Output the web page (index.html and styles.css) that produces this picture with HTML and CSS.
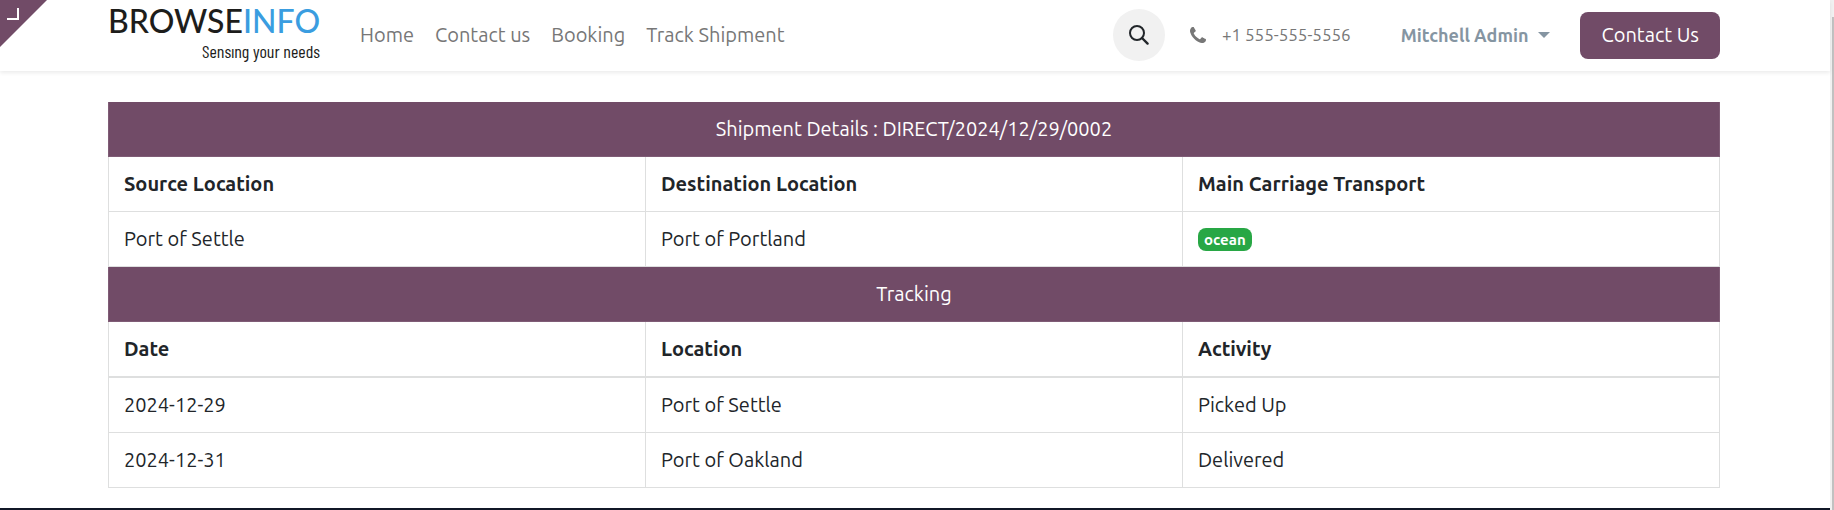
FILE: index.html
```
<!DOCTYPE html>
<html lang="en">
<head>
    <meta charset="UTF-8" />
    <meta name="viewport" content="width=device-width, initial-scale=1.0" />
    <title>Track Shipment | BrowseInfo</title>
    <link rel="stylesheet" href="styles.css">
</head>
<body>
    <div class="page">
        <header class="header">
            <a class="logo" href="#">
                <span class="logo-name">BROWSE<span class="logo-info">INFO</span></span>
                <span class="logo-tagline">Sensıng your needs</span>
            </a>
            <nav class="menu">
                <a href="#">Home</a>
                <a href="#">Contact us</a>
                <a href="#">Booking</a>
                <a href="#">Track Shipment</a>
            </nav>
            <div class="actions">
                <button class="search-button" type="button" aria-label="Search">
                    <svg width="22" height="22" viewBox="0 0 22 22" fill="none" stroke="#212529">
                        <circle cx="9" cy="9" r="7" stroke-width="2" />
                        <path d="M14 14l5.600 5.600" stroke-width="2.400" stroke-linecap="round" />
                    </svg>
                </button>
                <a class="phone" href="tel:+15555555556">
                    <svg width="16" height="16" viewBox="0 0 1408 1408" fill="currentColor">
                        <path d="M1408 1112q0 27-10 70.500t-21 68.500q-21 50-122 106-94 51-186 51-27 0-53-3.500t-57.500-12.500-47-14.500-55.500-20.500-49-18q-98-35-175-83-127-79-264-216t-216-264q-48-77-83-175-3-9-18-49t-20.500-55.500-14.500-47-12.500-57.500-3.500-53q0-92 51-186 56-101 106-122 25-11 68.500-21t70.500-10q14 0 21 3 18 6 53 76 11 19 30 54t35 63.500 31 53.500q3 4 17.500 25t21.500 35.500 7 28.500q0 20-28.500 50t-62 55-62 53-28.500 46q0 9 5 22.500t8.500 20.500 14 24 11.500 19q76 137 174 235t235 174q2 1 19 11.500t24 14 20.500 8.500 22.500 5q18 0 46-28.500t53-62 55-62 50-28.500q14 0 28.500 7t35.500 21.500 25 17.500q25 15 53.500 31t63.500 35 54 30q70 35 76 53 3 7 3 21z" />
                    </svg>
                    <span>+1 555-555-5556</span>
                </a>
                <button class="user-button" type="button" aria-haspopup="true">Mitchell Admin</button>
                <a class="contact-button" href="#">Contact Us</a>
            </div>
            <a class="corner" href="#" aria-label="Edit in backend">
                <svg width="47" height="47" viewBox="0 0 47 47">
                    <path d="M0 0H47L0 47z" fill="#714b67" />
                    <path d="M7 19H18V8" fill="none" stroke="#fff" stroke-width="2" />
                </svg>
            </a>
        </header>
        <main class="content">
            <table class="shipment">
                <thead>
                    <tr class="title">
                        <td colspan="3">Shipment Details : DIRECT/2024/12/29/0002</td>
                    </tr>
                    <tr>
                        <th scope="col">Source Location</th>
                        <th scope="col">Destination Location</th>
                        <th scope="col">Main Carriage Transport</th>
                    </tr>
                </thead>
                <tbody>
                    <tr>
                        <td>Port of Settle</td>
                        <td>Port of Portland</td>
                        <td><span class="badge">ocean</span></td>
                    </tr>
                </tbody>
                <tbody>
                    <tr class="title">
                        <td colspan="3">Tracking</td>
                    </tr>
                    <tr class="tracking-head">
                        <th scope="col">Date</th>
                        <th scope="col">Location</th>
                        <th scope="col">Activity</th>
                    </tr>
                    <tr>
                        <td>2024-12-29</td>
                        <td>Port of Settle</td>
                        <td>Picked Up</td>
                    </tr>
                    <tr>
                        <td>2024-12-31</td>
                        <td>Port of Oakland</td>
                        <td>Delivered</td>
                    </tr>
                </tbody>
            </table>
        </main>
        <footer class="footer"></footer>
    </div>
    <div class="scrollbar"><div class="scrollbar-thumb"></div></div>
</body>
</html>
```

FILE: styles.css
```
* {
    box-sizing: border-box;
}
body {
    margin: 0;
    display: flex;
    height: 100vh;
    overflow: hidden;
    font-family: Ubuntu, "Noto Sans", sans-serif;
    font-size: 20px;
    line-height: 30px;
    color: #212529;
    background: #fff;
}
a {
    color: inherit;
    text-decoration: none;
}
button {
    font-family: inherit;
    border: 0;
    cursor: pointer;
}
.page {
    flex: 1;
    display: flex;
    flex-direction: column;
}

/* Header */
.header {
    position: relative;
    display: flex;
    align-items: center;
    height: 71px;
    padding: 0 110px 1px 108px;
    box-shadow: 0 2px 4px rgba(0, 0, 0, 0.08);
}
.corner {
    position: absolute;
    top: 0;
    left: 0;
}
.corner svg {
    display: block;
}
.logo {
    display: flex;
    flex-direction: column;
    width: 212px;
    color: #1d1d1b;
}
.logo-name {
    font-family: Lato, sans-serif;
    font-size: 32px;
    font-weight: 500;
    line-height: 32px;
}
.logo-info {
    color: #3a9de0;
}
.logo-tagline {
    align-self: flex-end;
    font-family: "Barlow Condensed", "Roboto Condensed", "Liberation Sans Narrow", Roboto, sans-serif;
    font-size: 18px;
    line-height: 28px;
}
.menu {
    display: flex;
    gap: 21px;
    margin-left: 40px;
    color: #777;
}
.actions {
    display: flex;
    align-items: center;
    margin-left: auto;
}
.search-button {
    display: flex;
    align-items: center;
    justify-content: center;
    width: 52px;
    height: 52px;
    padding: 0;
    border-radius: 50%;
    background: #f1f1f1;
}
.phone {
    display: flex;
    align-items: center;
    gap: 16px;
    margin-left: 25px;
    font-size: 17px;
    color: #777;
}
.user-button {
    display: flex;
    align-items: center;
    gap: 10px;
    margin: 0 30px 0 50px;
    padding: 0;
    font-size: 18px;
    font-weight: 700;
    color: #8595a2;
    background: none;
}
.user-button::after {
    content: "";
    border: 6px solid transparent;
    border-top-color: currentColor;
    border-bottom: 0;
}
.contact-button {
    padding: 8px 21px 9px;
    border-radius: 8px;
    color: #fff;
    background: #714b67;
}

/* Shipment table */
.content {
    padding: 31px 110px 20px 108px;
}
.shipment {
    width: 100%;
    table-layout: fixed;
    border-collapse: collapse;
}
.shipment th,
.shipment td {
    padding: 12px 15px;
    border: 1px solid #dedfdf;
    text-align: left;
}
.shipment .title td {
    border-color: #7f5c76;
    border-top: 0;
    color: #fff;
    text-align: center;
    background: #714b67;
}
.shipment .tracking-head th {
    border-bottom-width: 2px;
}
.badge {
    display: block;
    width: fit-content;
    padding: 0 6px;
    border-radius: 8px;
    font-size: 15px;
    font-weight: 700;
    line-height: 23px;
    color: #fff;
    background: #28a745;
}
.footer {
    flex: 1;
    background: #111827;
}

/* Scrollbar */
.scrollbar {
    width: 4px;
    padding: 17px 0 0 2px;
    background: #f1f1f1;
}
.scrollbar-thumb {
    height: 100%;
    background: #c1c1c1;
}
```
